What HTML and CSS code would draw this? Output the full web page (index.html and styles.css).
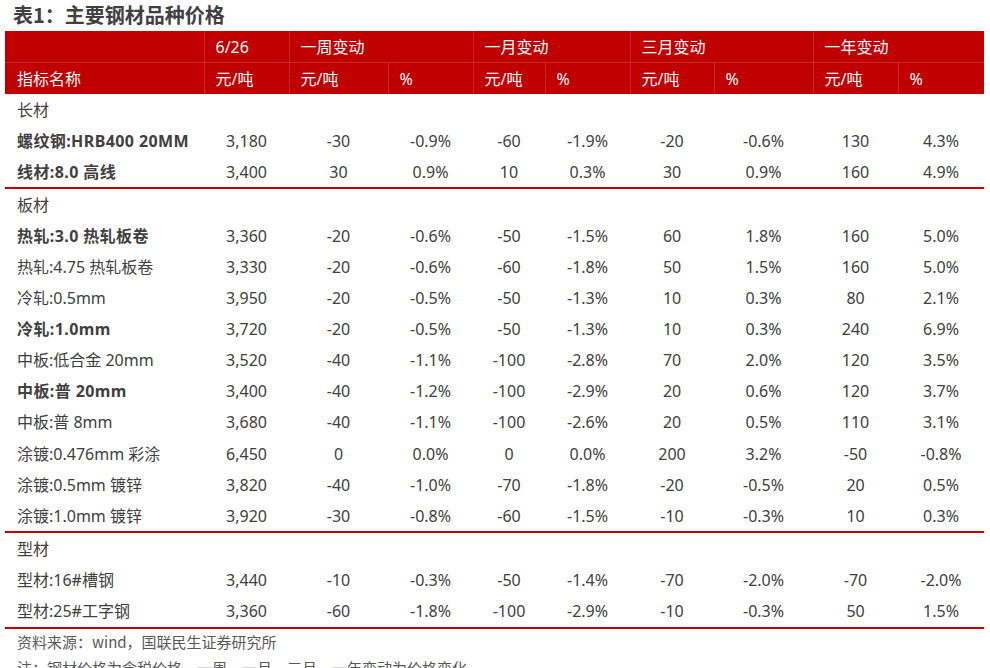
FILE: index.html
```html
<!DOCTYPE html>
<html lang="zh-CN">
<head>
<meta charset="utf-8">
<title>表1：主要钢材品种价格</title>
<link rel="stylesheet" href="styles.css">
</head>
<body>
<div class="page">
  <h1 class="title">表1：主要钢材品种价格</h1>
  <table class="steel">
    <colgroup>
      <col class="c-name"><col class="c85"><col class="c99"><col class="c85">
      <col class="c72"><col class="c85"><col class="c84"><col class="c99">
      <col class="c85"><col class="c86">
    </colgroup>
    <thead>
      <tr class="h1">
        <th></th>
        <th>6/26</th>
        <th colspan="2">一周变动</th>
        <th colspan="2">一月变动</th>
        <th colspan="2">三月变动</th>
        <th colspan="2">一年变动</th>
      </tr>
      <tr class="h2">
        <th>指标名称</th>
        <th>元/吨</th>
        <th>元/吨</th><th>%</th>
        <th>元/吨</th><th>%</th>
        <th>元/吨</th><th>%</th>
        <th>元/吨</th><th>%</th>
      </tr>
    </thead>
    <tbody>
      <tr class="grp"><td colspan="10">长材</td></tr>
      <tr><td class="b">螺纹钢:HRB400 20MM</td><td>3,180</td><td>-30</td><td>-0.9%</td><td>-60</td><td>-1.9%</td><td>-20</td><td>-0.6%</td><td>130</td><td>4.3%</td></tr>
      <tr class="last"><td class="b">线材:8.0 高线</td><td>3,400</td><td>30</td><td>0.9%</td><td>10</td><td>0.3%</td><td>30</td><td>0.9%</td><td>160</td><td>4.9%</td></tr>
    </tbody>
    <tbody>
      <tr class="grp"><td colspan="10">板材</td></tr>
      <tr><td class="b">热轧:3.0 热轧板卷</td><td>3,360</td><td>-20</td><td>-0.6%</td><td>-50</td><td>-1.5%</td><td>60</td><td>1.8%</td><td>160</td><td>5.0%</td></tr>
      <tr><td>热轧:4.75 热轧板卷</td><td>3,330</td><td>-20</td><td>-0.6%</td><td>-60</td><td>-1.8%</td><td>50</td><td>1.5%</td><td>160</td><td>5.0%</td></tr>
      <tr><td>冷轧:0.5mm</td><td>3,950</td><td>-20</td><td>-0.5%</td><td>-50</td><td>-1.3%</td><td>10</td><td>0.3%</td><td>80</td><td>2.1%</td></tr>
      <tr><td class="b">冷轧:1.0mm</td><td>3,720</td><td>-20</td><td>-0.5%</td><td>-50</td><td>-1.3%</td><td>10</td><td>0.3%</td><td>240</td><td>6.9%</td></tr>
      <tr><td>中板:低合金 20mm</td><td>3,520</td><td>-40</td><td>-1.1%</td><td>-100</td><td>-2.8%</td><td>70</td><td>2.0%</td><td>120</td><td>3.5%</td></tr>
      <tr><td class="b">中板:普 20mm</td><td>3,400</td><td>-40</td><td>-1.2%</td><td>-100</td><td>-2.9%</td><td>20</td><td>0.6%</td><td>120</td><td>3.7%</td></tr>
      <tr><td>中板:普 8mm</td><td>3,680</td><td>-40</td><td>-1.1%</td><td>-100</td><td>-2.6%</td><td>20</td><td>0.5%</td><td>110</td><td>3.1%</td></tr>
      <tr><td>涂镀:0.476mm 彩涂</td><td>6,450</td><td>0</td><td>0.0%</td><td>0</td><td>0.0%</td><td>200</td><td>3.2%</td><td>-50</td><td>-0.8%</td></tr>
      <tr><td>涂镀:0.5mm 镀锌</td><td>3,820</td><td>-40</td><td>-1.0%</td><td>-70</td><td>-1.8%</td><td>-20</td><td>-0.5%</td><td>20</td><td>0.5%</td></tr>
      <tr class="last"><td>涂镀:1.0mm 镀锌</td><td>3,920</td><td>-30</td><td>-0.8%</td><td>-60</td><td>-1.5%</td><td>-10</td><td>-0.3%</td><td>10</td><td>0.3%</td></tr>
    </tbody>
    <tbody>
      <tr class="grp"><td colspan="10">型材</td></tr>
      <tr><td>型材:16#槽钢</td><td>3,440</td><td>-10</td><td>-0.3%</td><td>-50</td><td>-1.4%</td><td>-70</td><td>-2.0%</td><td>-70</td><td>-2.0%</td></tr>
      <tr class="last"><td>型材:25#工字钢</td><td>3,360</td><td>-60</td><td>-1.8%</td><td>-100</td><td>-2.9%</td><td>-10</td><td>-0.3%</td><td>50</td><td>1.5%</td></tr>
    </tbody>
  </table>
  <p class="source">资料来源：wind，国联民生证券研究所</p>
  <p class="note">注：钢材价格为含税价格，一周、一月、三月、一年变动为价格变化</p>
</div>
</body>
</html>
```

FILE: styles.css
```css
html, body {
  margin: 0;
  padding: 0;
  background: #ffffff;
  overflow: hidden;
}

body {
  width: 990px;
  height: 668px;
  font-family: "Noto Sans", "Noto Sans CJK SC", sans-serif;
  color: #404040;
}

.page {
  padding: 0 0 0 5px;
}

.title {
  margin: 0;
  height: 31px;
  padding-left: 8px;
  font-size: 20px;
  font-weight: 700;
  line-height: 30px;
  color: #404040;
  font-family: "Noto Sans CJK SC", "Noto Sans", sans-serif;
}

.steel {
  width: 979px;
  table-layout: fixed;
  border-collapse: collapse;
  border-spacing: 0;
  font-size: 16px;
}

.c-name { width: 199px; }
.c72 { width: 72px; }
.c84 { width: 84px; }
.c85 { width: 85px; }
.c86 { width: 86px; }
.c99 { width: 99px; }

.steel thead th {
  background: #c00000;
  color: #ffffff;
  font-weight: 400;
  text-align: left;
  vertical-align: middle;
  padding: 0 0 0 11px;
  height: 31px;
  line-height: 20px;
  white-space: nowrap;
  border-left: 1px solid rgba(255, 255, 255, 0.16);
}

.steel thead th:first-child {
  border-left: none;
  padding-left: 12px;
}

.steel thead .h2 th {
  border-top: 1px solid rgba(255, 255, 255, 0.16);
}

.steel tbody td {
  height: 31.1px;
  padding: 0;
  line-height: 20px;
  vertical-align: middle;
  text-align: center;
  white-space: nowrap;
  color: #404040;
}

.steel tbody td:first-child {
  text-align: left;
  padding-left: 12px;
}

.steel tbody td.b {
  font-weight: 700;
  letter-spacing: 0.4px;
}

.steel tbody tr.last td {
  border-bottom: 2px solid #c00000;
}

.source {
  margin: 0;
  padding-left: 12px;
  height: 29px;
  line-height: 25px;
  font-size: 15px;
  color: #595959;
  font-family: "Noto Sans CJK SC", "Noto Sans", sans-serif;
}

.note {
  margin: 0;
  padding-left: 12px;
  line-height: 20px;
  font-size: 15px;
  color: #595959;
  font-family: "Noto Sans CJK SC", "Noto Sans", sans-serif;
}
```
